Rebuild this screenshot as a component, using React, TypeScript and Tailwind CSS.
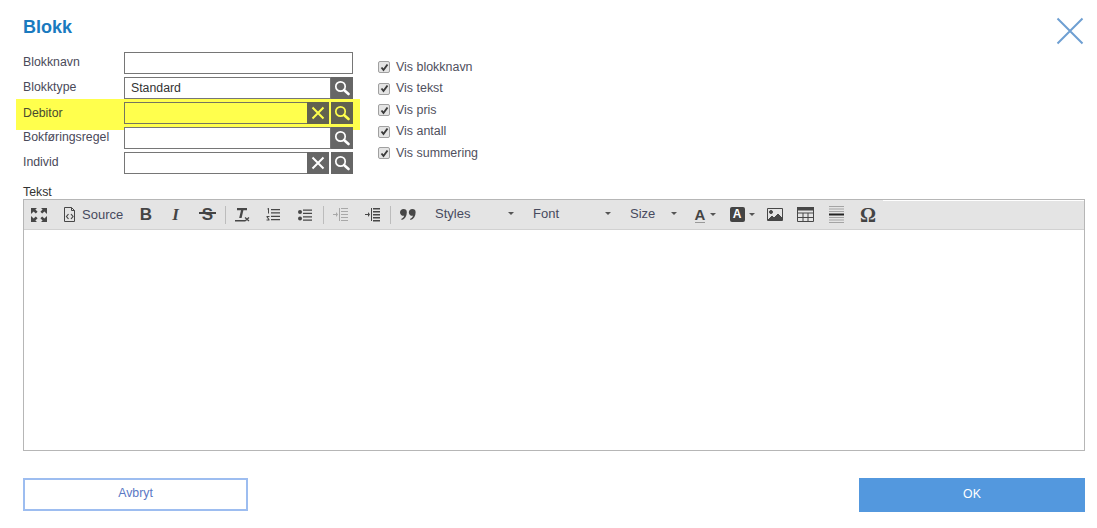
import React from 'react';

const fieldRows = [
  { label: 'Blokknavn', value: '', clear: false, search: false },
  { label: 'Blokktype', value: 'Standard', clear: false, search: true },
  { label: 'Debitor', value: '', clear: true, search: true, marked: true },
  { label: 'Bokføringsregel', value: '', clear: false, search: true },
  { label: 'Individ', value: '', clear: true, search: true },
];

const checks = ['Vis blokknavn', 'Vis tekst', 'Vis pris', 'Vis antall', 'Vis summering'];

const SearchIcon = ({ color }: { color: string }) => (
  <svg width="16" height="16" viewBox="0 0 16 16" fill="none" stroke={color}>
    <circle cx="6.5" cy="6.5" r="4.7" strokeWidth="1.7" />
    <path d="M10 10l4.5 4" strokeWidth="2.6" strokeLinecap="round" />
  </svg>
);

const ClearIcon = ({ color }: { color: string }) => (
  <svg width="14" height="14" viewBox="0 0 14 14" fill="none" stroke={color} strokeWidth="2">
    <path d="M1.500 1.500l11 11M12.500 1.500l-11 11" />
  </svg>
);

const Field = ({ row }: { row: (typeof fieldRows)[number] }) => {
  const iconColor = row.marked ? '#ffff4d' : '#ffffff';
  const btn = row.marked ? 'bg-[#62624f]' : 'bg-[#666]';
  return (
    <div
      className={
        row.marked
          ? 'flex items-center -mx-[7px] px-[7px] -mt-[3px] pt-[3px] -mb-[6px] pb-[6px] bg-[#ffff4d]'
          : 'flex items-center'
      }
    >
      <label
        className={
          row.marked
            ? 'w-[101px] mt-[1px] text-[12.3px] text-[#4a4a30]'
            : 'w-[101px] -mt-[1px] text-[12.3px] text-[#4a4a5a]'
        }
      >
        {row.label}
      </label>
      <div className="flex w-[229px] h-[22px]">
        <div
          className={`flex-1 h-full border px-[6px] text-[12.3px] leading-[20px] text-[#333] ${
            row.marked ? 'border-[#75755f]' : 'border-[#767676] bg-white'
          }`}
        >
          {row.value}
        </div>
        {row.clear && (
          <span className={`w-[22px] h-full -ml-px mr-[2px] flex items-center justify-center ${btn}`}>
            <ClearIcon color={iconColor} />
          </span>
        )}
        {row.search && (
          <span className={`w-[22px] h-full flex items-center justify-center ${btn}`}>
            <SearchIcon color={iconColor} />
          </span>
        )}
      </div>
    </div>
  );
};

const Tool = ({ w, children }: { w: string; children: React.ReactNode }) => (
  <span className={`${w} h-full flex items-center justify-center shrink-0`}>{children}</span>
);

const Sep = () => <span className="w-px h-[18px] bg-[#bcbcbc] shrink-0" />;

const Caret = () => (
  <svg width="6" height="3" viewBox="0 0 6 3" className="shrink-0">
    <path d="M0 0h6L3 3z" fill="#555" />
  </svg>
);

const g = '#474747';

export default function App() {
  return (
    <div className="w-[1097px] h-[528px] bg-white overflow-hidden pl-[23px] pr-[12px] pt-[17px] font-['Liberation_Sans',Arial,sans-serif]">
      <div className="flex items-start justify-between h-[35px]">
        <h1 className="text-[18px] leading-[20px] font-bold text-[#1a7abf]">Blokk</h1>
        <svg width="28" height="28" viewBox="0 0 28 28" className="mr-[1px]" fill="none" stroke="#6e9fd2" strokeWidth="2">
          <path d="M1.500 1.500l25 25M26.500 1.500l-25 25" />
        </svg>
      </div>

      <div className="flex">
        <div className="flex flex-col gap-[3px] w-[330px]">
          {fieldRows.map(row => (
            <Field key={row.label} row={row} />
          ))}
        </div>
        <div className="flex flex-col gap-[5px] ml-[25px] pt-[7px]">
          {checks.map(text => (
            <div key={text} className="flex items-center gap-[6px] h-[16.5px] text-[12.45px] text-[#50505e]">
              <span className="w-[12px] h-[12px] rounded-[2px] border border-[#a0a0a0] bg-[#e4e4e4] flex items-center justify-center">
                <svg width="9" height="9" viewBox="0 0 9 9" fill="none" stroke="#3a3a3a" strokeWidth="1.9">
                  <path d="M1.500 4.500l2 2.500 4-5.500" />
                </svg>
              </span>
              {text}
            </div>
          ))}
        </div>
      </div>

      <div className="mt-[11px] h-[14px] text-[12.3px] leading-[14px] text-[#333]">Tekst</div>

      <div className="w-[1062px] h-[252px] border border-[#b6b6b6] flex flex-col">
        <div className="relative h-[30px] bg-[#e4e4e4] border-b border-[#d1d1d1] flex items-center text-[13px] text-[#474a5e] shrink-0">
          <span className="absolute right-0 top-0 left-[859px] h-px bg-white" />
          <Tool w="w-[30px]">
            <svg width="16" height="14" viewBox="0 0 16 14" fill={g}>
              <path d="M0 0h6L4.400 1.600 6.600 3.800 4.800 5.600 2.600 3.400 0 6zM16 0h-6l1.600 1.600-2.200 2.200 1.800 1.800 2.200-2.200L16 6zM0 14h6l-1.600-1.600 2.200-2.200-1.800-1.800-2.200 2.200L0 8zM16 14h-6l1.600-1.600-2.200-2.200 1.800-1.800 2.200 2.200L16 8z" />
            </svg>
          </Tool>
          <span className="w-[77px] h-full flex items-center pl-[9px] gap-[6px] shrink-0">
            <svg width="13" height="15" viewBox="0 0 13 15" fill="none" stroke={g}>
              <path d="M1.500.5h7l3 3v11h-10zM8.500.5v3h3" />
              <path d="M5.500 7L3.500 9.500 5.500 12M8 7l2 2.500L8 12" strokeWidth="1.2" />
            </svg>
            Source
          </span>
          <Tool w="w-[30px]">
            <span className="text-[17px] font-bold text-[#444]">B</span>
          </Tool>
          <Tool w="w-[29px]">
            <span className="text-[17px] font-bold italic text-[#444] font-['Liberation_Serif',serif]">I</span>
          </Tool>
          <Tool w="w-[35px]">
            <span className="relative text-[17px] font-bold text-[#444]">
              S
              <span className="absolute -left-[2.500px] -right-[2.500px] top-[10px] h-[2px] bg-[#444]" />
            </span>
          </Tool>
          <Sep />
          <Tool w="w-[31px]">
            <svg width="16" height="16" viewBox="0 0 16 16" fill={g}>
              <path d="M3 1h10v2.200H9.400L7.600 11H5.200L7 3.200H3zM1 13h10v1.500H1z" />
              <path d="M11 10.500l4 3.500M15 10.500l-4 3.500" stroke={g} strokeWidth="1.3" />
            </svg>
          </Tool>
          <Tool w="w-[32px]">
            <svg width="14" height="14" viewBox="0 0 14 14" fill={g}>
              <path d="M5 1h9v1.300H5zM5 4.300h9v1.300H5zM5 7.700h9V9H5zM5 11h9v1.300H5z" />
              <path d="M1 1l1.500-1H3v5.500H2V1.400zM.5 8h3v1H1.800l1.700 2.500v1h-3v-1h1.800L.5 9z" />
            </svg>
          </Tool>
          <Tool w="w-[32px]">
            <svg width="14" height="12" viewBox="0 0 14 12" fill={g}>
              <path d="M5 .5h9v1.300H5zM5 3.800h9v1.300H5zM5 7.200h9v1.300H5zM5 10.500h9v1.300H5z" />
              <circle cx="2" cy="3" r="2" />
              <circle cx="2" cy="9.500" r="2" />
            </svg>
          </Tool>
          <span className="w-[2px] shrink-0" />
          <Sep />
          <Tool w="w-[33px]">
            <svg width="15" height="14" viewBox="0 0 15 14" fill="#a8a8a8">
              <path d="M8 0h7v1H8zM8 3h7v1H8zM8 6h7v1H8zM8 9h7v1H8zM8 12h7v1H8zM6 0h1v13H6zM0 6h3V4l2 2.500L3 9V7H0z" />
            </svg>
          </Tool>
          <Tool w="w-[31px]">
            <svg width="15" height="14" viewBox="0 0 15 14" fill={g}>
              <path d="M8 0h7v1.400H8zM8 3h7v1.400H8zM8 6h7v1.400H8zM8 9h7v1.400H8zM8 12h7v1.400H8zM6 0h1v13H6zM0 6h3V4l2 2.500L3 9V7H0z" />
            </svg>
          </Tool>
          <span className="w-[2px] shrink-0" />
          <Sep />
          <Tool w="w-[33px]">
            <svg width="16" height="11" viewBox="0 0 16 11" fill={g}>
              <path d="M3.500 0a3.300 3.300 0 013.300 3.400C6.800 7 5 9.800 1.800 11l-.6-1C3 9 4 7.900 4.200 6.800 1.900 7 0 5.500 0 3.400 0 1.500 1.500 0 3.500 0zM12.300 0a3.300 3.300 0 013.300 3.400c0 3.600-1.800 6.400-5 7.600l-.6-1c1.800-1 2.800-2.100 3-3.200-2.300.2-4.200-1.300-4.200-3.400C8.800 1.500 10.300 0 12.300 0z" />
            </svg>
          </Tool>
          <span className="w-[91px] h-full flex items-center pl-[11px] pb-[2px] shrink-0">
            Styles
            <span className="ml-auto mr-[1px] flex"><Caret /></span>
          </span>
          <span className="w-[96px] h-full flex items-center pl-[18px] pb-[2px] shrink-0">
            Font
            <span className="ml-auto flex"><Caret /></span>
          </span>
          <span className="w-[66px] h-full flex items-center pl-[19px] pb-[2px] shrink-0">
            Size
            <span className="ml-auto flex"><Caret /></span>
          </span>
          <span className="w-[45px] h-full flex items-center justify-center gap-[5px] shrink-0 pl-[12px]">
            <span className="text-[15px] leading-[15px] font-bold text-[#444] border-b border-[#999]">A</span>
            <Caret />
          </span>
          <span className="w-[38px] h-full flex items-center justify-center gap-[4px] shrink-0 pl-[2px]">
            <span className="w-[15px] h-[15px] rounded-[2px] bg-[#444] text-white text-[12px] leading-[15px] font-bold text-center">A</span>
            <Caret />
          </span>
          <Tool w="w-[30px]">
            <svg width="16" height="13" viewBox="0 0 16 13" fill="none" stroke={g}>
              <path d="M.5.5h15v12H.5z" />
              <circle cx="4" cy="4" r="1.500" fill={g} />
              <path d="M1 12l4-4 2 2 4-4 4 4v2z" fill={g} />
            </svg>
          </Tool>
          <Tool w="w-[30px]">
            <svg width="17" height="15" viewBox="0 0 17 15" fill="none" stroke={g}>
              <path d="M.5.5h16v14H.5zM.5 6h16M.5 10.500h16M6 6v8.500M11 6v8.500" />
              <path d="M0 0h17v3.500H0z" fill={g} stroke="none" />
            </svg>
          </Tool>
          <Tool w="w-[32px]">
            <svg width="15" height="17" viewBox="0 0 15 17" fill="#a4a4a4">
              <path d="M0 0h15v1H0zM0 2.500h15v1H0zM0 5h15v1H0zM0 11h15v1H0zM0 13.500h15v1H0zM0 16h15v1H0z" />
              <path d="M0 7.500h15v2H0z" fill="#222" />
            </svg>
          </Tool>
          <Tool w="w-[32px]">
            <span className="text-[20px] leading-none text-[#444] font-bold font-['Liberation_Serif',serif]">Ω</span>
          </Tool>
        </div>
        <div className="flex-1 bg-white" />
      </div>

      <div className="flex justify-between mt-[27px]">
        <button className="w-[225px] h-[33px] pb-[2px] border-2 border-[#9dbdf0] bg-white text-[12.3px] text-[#5b78c4]">
          Avbryt
        </button>
        <button className="w-[226px] h-[34px] pb-[2px] bg-[#5398de] text-[12.3px] text-white">OK</button>
      </div>
    </div>
  );
}
